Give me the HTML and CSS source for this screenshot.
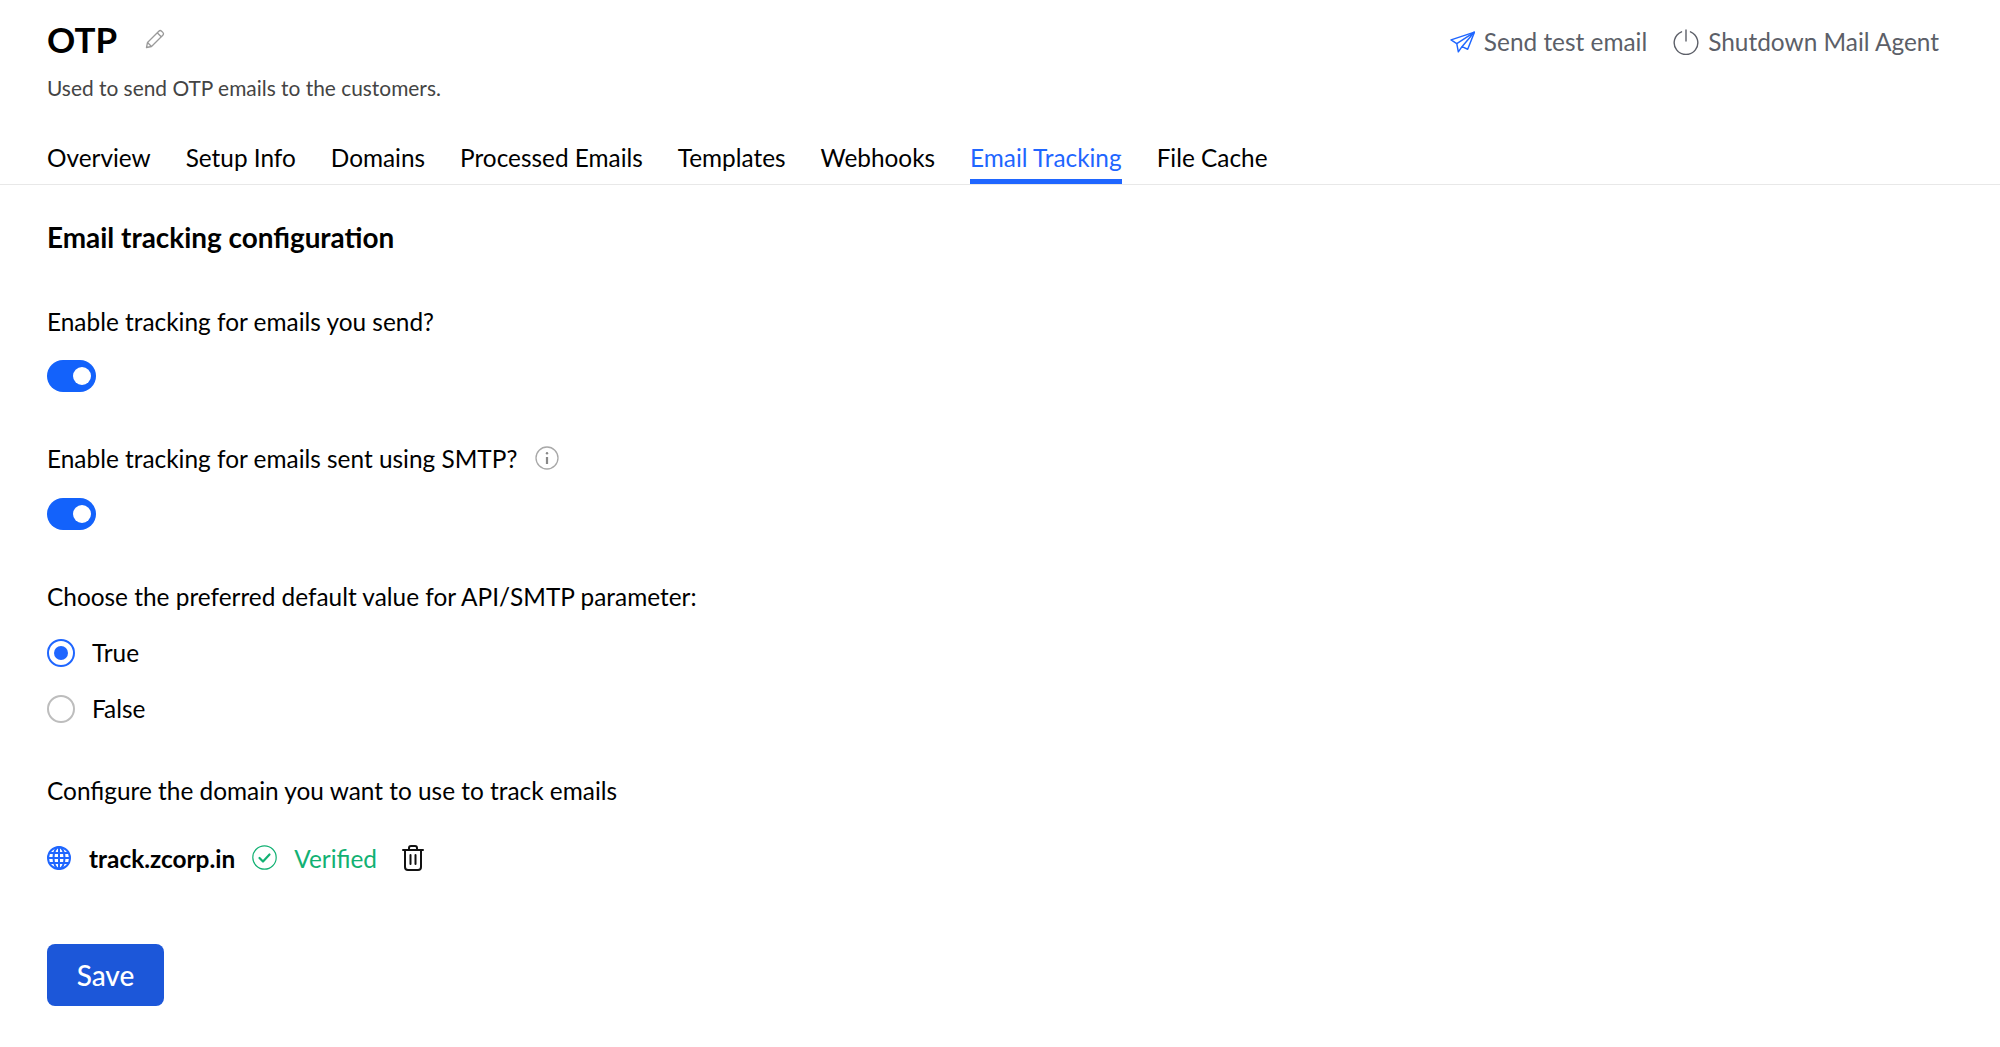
FILE: index.html
```html
<!DOCTYPE html>
<html lang="en">
<head>
<meta charset="utf-8">
<title>OTP - Email Tracking</title>
<link rel="stylesheet" href="styles.css">
</head>
<body>
<header class="head">
  <div class="head-main">
    <div class="title-row">
      <h1 class="title">OTP</h1>
      <svg class="edit-icon" viewBox="0 0 20 20" width="20" height="20" fill="none" stroke="#9a9a9a" stroke-width="1.3" stroke-linejoin="round"><path d="M1.5 18.5l1-5L13.8 2.2a2 2 0 0 1 2.8 0l1.2 1.2a2 2 0 0 1 0 2.8L6.5 17.500z"/><path d="M2.500 13.500l4 4M12.200 3.800l4 4"/></svg>
    </div>
    <p class="desc">Used to send OTP emails to the customers.</p>
  </div>
  <div class="actions">
    <a class="action">
      <svg viewBox="0 0 24 24" width="25" height="25" fill="none" stroke="#1f66ff" stroke-width="1.4" stroke-linejoin="round"><path d="M23.500 2L1 9.500l5.500 3.500 1.500 8 3.500-5 5.500 2.500z"/><path d="M23.500 2L6.500 13M23.500 2L11.500 16"/></svg>
      <span>Send test email</span>
    </a>
    <a class="action">
      <svg viewBox="0 0 26 26" width="26" height="26" fill="none" stroke="#5c5f68" stroke-width="1.4" stroke-linecap="round"><path d="M8.500 2.800a11.800 11.800 0 1 0 9 0"/><path d="M13 1v11"/></svg>
      <span>Shutdown Mail Agent</span>
    </a>
  </div>
</header>
<nav class="tabs">
  <a class="tab">Overview</a>
  <a class="tab">Setup Info</a>
  <a class="tab">Domains</a>
  <a class="tab">Processed Emails</a>
  <a class="tab">Templates</a>
  <a class="tab">Webhooks</a>
  <a class="tab tab-active">Email Tracking</a>
  <a class="tab">File Cache</a>
</nav>
<main class="content">
  <h2 class="section-title">Email tracking configuration</h2>
  <section class="field field-first">
    <div class="label">Enable tracking for emails you send?</div>
    <div class="toggle"><span class="knob"></span></div>
  </section>
  <section class="field field-second">
    <div class="label label-icon">
      <span>Enable tracking for emails sent using SMTP?</span>
      <svg class="info" viewBox="0 0 24 24" width="24" height="24" fill="none" stroke="#a8a8a8" stroke-width="1.3"><circle cx="12" cy="12" r="11"/><path d="M12 11v7" stroke="#888" stroke-width="2.2"/><circle cx="12" cy="7.200" r="1.200" fill="#888" stroke="none"/></svg>
    </div>
    <div class="toggle"><span class="knob"></span></div>
  </section>
  <section class="field field-third">
    <div class="label">Choose the preferred default value for API/SMTP parameter:</div>
    <div class="radios">
      <div class="radio-row"><span class="radio radio-on"></span><span>True</span></div>
      <div class="radio-row"><span class="radio"></span><span>False</span></div>
    </div>
  </section>
  <section class="field field-fourth">
    <div class="label">Configure the domain you want to use to track emails</div>
    <div class="domain">
      <svg class="globe" viewBox="0 0 24 24" width="24" height="24" fill="none" stroke="#1f66ff" stroke-width="2"><circle cx="12" cy="12" r="11"/><ellipse cx="12" cy="12" rx="5.500" ry="11"/><path d="M12 1v22M2.500 7h19M1 12h22M2.500 17h19"/></svg>
      <span class="domain-name">track.zcorp.in</span>
      <svg class="check" viewBox="0 0 25 25" width="25" height="25" fill="none" stroke="#12b173"><circle cx="12.500" cy="12.500" r="11.700" stroke-width="1.200"/><path d="M7.500 13l3.500 3.500 6.500-7" stroke-width="2.200" stroke-linecap="round" stroke-linejoin="round"/></svg>
      <span class="verified">Verified</span>
      <svg class="trash" viewBox="0 0 22 26" width="22" height="26" fill="none" stroke="#111" stroke-width="2" stroke-linecap="round" stroke-linejoin="round"><path d="M1 5h20M7 5V3a2 2 0 0 1 2-2h4a2 2 0 0 1 2 2v2M3 5v17a3 3 0 0 0 3 3h10a3 3 0 0 0 3-3V5M8.500 10v9M13.500 10v9"/></svg>
    </div>
  </section>
  <button class="save" type="button">Save</button>
</main>
</body>
</html>
```
FILE: styles.css
```css
* { box-sizing: border-box; }
html, body { margin: 0; padding: 0; }
body {
  height: 1047px;
  overflow: hidden;
  background: #fff;
  color: #000;
  font-family: Lato, "Open Sans", sans-serif;
}
.head {
  display: flex;
  justify-content: space-between;
  align-items: flex-start;
  padding: 18px 61px 0 47px;
  height: 136px;
}
.title-row { display: flex; align-items: center; gap: 28px; height: 43px; }
.title { margin: 0; font-size: 35px; line-height: 43px; font-weight: 700; }
.edit-icon { margin-top: -2px; }
.desc { margin: 14px 0 0; font-size: 20.900px; line-height: 26px; color: #444; }
.actions { display: flex; gap: 26px; padding-top: 8px; }
.action { display: flex; align-items: center; gap: 9px; font-size: 24.400px; line-height: 32px; color: #5c5f68; }
.tabs {
  display: flex;
  gap: 35px;
  height: 49px;
  padding: 0 47px;
  border-bottom: 1px solid #e8e8e8;
}
.tab { font-size: 24.370px; line-height: 43px; height: 48px; }
.tab-active { color: #1f66ff; border-bottom: 5px solid #1f66ff; }
.content { padding: 0 47px; }
.section-title { margin: 0; padding-top: 34px; font-size: 27.900px; line-height: 36px; font-weight: 700; }
.label { font-size: 24.400px; line-height: 32px; }
.label-icon { display: flex; align-items: center; gap: 17px; }
.info { margin-top: -2px; margin-left: 1px; }
.field-first { margin-top: 51px; }
.field-second { margin-top: 51px; }
.field-third { margin-top: 51px; }
.field-fourth { margin-top: 52px; }
.toggle {
  display: flex;
  align-items: center;
  justify-content: flex-end;
  width: 49px;
  height: 32px;
  margin-top: 23px;
  padding-right: 5px;
  border-radius: 16px;
  background: #1362fb;
}
.field-first .toggle { margin-top: 22px; }
.knob { width: 18px; height: 18px; border-radius: 50%; background: #fff; }
.radios { display: flex; flex-direction: column; gap: 28px; margin-top: 26px; }
.radio-row { display: flex; align-items: center; gap: 17px; font-size: 24.400px; line-height: 28px; }
.radio {
  width: 28px;
  height: 28px;
  border: 2px solid #bdbdbd;
  border-radius: 50%;
  background: #fff;
}
.radio-on { border-color: #1f66ff; padding: 5px; background: #1f66ff content-box; }
.domain { display: flex; align-items: center; height: 32px; margin-top: 35px; font-size: 24.400px; }
.domain-name { margin-left: 18px; font-weight: 700; }
.check { margin-left: 17px; margin-top: -2px; }
.verified { margin-left: 17px; color: #12b173; }
.trash { margin-left: 25px; }
.save {
  display: block;
  width: 117px;
  height: 62px;
  margin-top: 70px;
  border: 0;
  border-radius: 8px;
  background: #1c57d9;
  color: #fff;
  font-family: inherit;
  font-size: 28px;
  font-weight: 500;
}
```
